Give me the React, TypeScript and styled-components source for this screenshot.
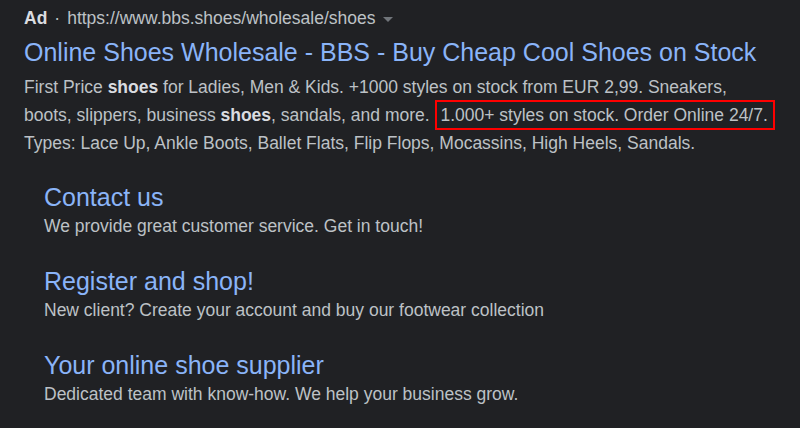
import React from 'react';
import styled, { createGlobalStyle } from 'styled-components';

const GlobalStyle = createGlobalStyle`
  body {
    margin: 0;
    background: #202124;
    font-family: Arial, "Liberation Sans", sans-serif;
  }
`;

const Page = styled.div`
  padding: 7px 24px 0 24px;
  color: #bdc1c6;
  width: 800px;
  box-sizing: border-box;
  height: 428px;
  overflow: hidden;
`;

const AdLine = styled.div`
  display: flex;
  align-items: center;
  font-size: 17.5px;
  line-height: 22px;
  color: #bdc1c6;
  > b {
    color: #dadce0;
    font-weight: bold;
  }
  > .dot {
    margin: 0 7px;
  }
`;

const Caret = styled.span`
  margin-left: 7px;
  margin-top: 2px;
  width: 0;
  height: 0;
  border-left: 5px solid transparent;
  border-right: 5px solid transparent;
  border-top: 5px solid #70757a;
`;

const Title = styled.a`
  display: block;
  margin-top: 8px;
  font-size: 25px;
  line-height: 30px;
  color: #8ab4f8;
  text-decoration: none;
`;

const Description = styled.div`
  margin-top: 6px;
  font-size: 17.5px;
  line-height: 28px;
  > b {
    color: #dadce0;
  }
`;

const Highlight = styled.span`
  border: 2px solid #ff0000;
  padding: 3px 5px 3px 4px;
  white-space: nowrap;
`;

const Sitelinks = styled.div`
  margin-top: 26px;
  padding-left: 20px;
  display: flex;
  flex-direction: column;
  gap: 26px;
`;

const Sitelink = styled.div`
  display: flex;
  flex-direction: column;
`;

const LinkTitle = styled.a`
  font-size: 25px;
  line-height: 29px;
  color: #8ab4f8;
  text-decoration: none;
`;

const LinkText = styled.div`
  font-size: 17.5px;
  line-height: 29px;
`;

const links = [
  { title: 'Contact us', text: 'We provide great customer service. Get in touch!' },
  { title: 'Register and shop!', text: 'New client? Create your account and buy our footwear collection' },
  { title: 'Your online shoe supplier', text: 'Dedicated team with know-how. We help your business grow.' },
];

export default function App() {
  return (
    <Page>
      <GlobalStyle />
      <AdLine>
        <b>Ad</b>
        <span className="dot">·</span>
        <span>https://www.bbs.shoes/wholesale/shoes</span>
        <Caret />
      </AdLine>
      <Title>Online Shoes Wholesale - BBS - Buy Cheap Cool Shoes on Stock</Title>
      <Description>
        First Price <b>shoes</b> for Ladies, Men &amp; Kids. +1000 styles on stock from EUR 2,99. Sneakers,
        boots, slippers, business <b>shoes</b>, sandals, and more. <Highlight>1.000+ styles on stock. Order Online 24/7.</Highlight>
        {' '}Types: Lace Up, Ankle Boots, Ballet Flats, Flip Flops, Mocassins, High Heels, Sandals.
      </Description>
      <Sitelinks>
        {links.map(l => (
          <Sitelink key={l.title}>
            <LinkTitle>{l.title}</LinkTitle>
            <LinkText>{l.text}</LinkText>
          </Sitelink>
        ))}
      </Sitelinks>
    </Page>
  );
}
